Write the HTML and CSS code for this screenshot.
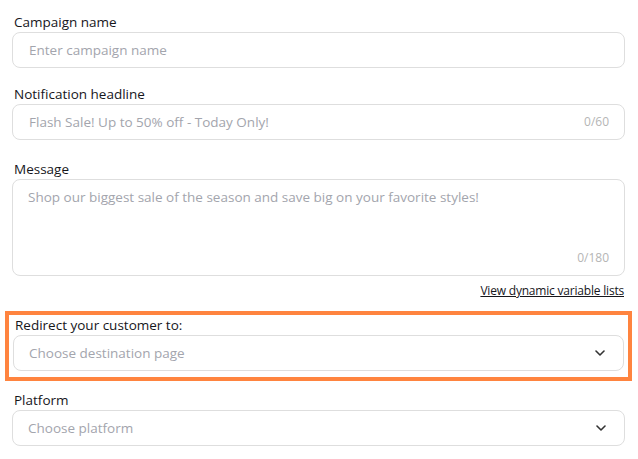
FILE: index.html
```html
<!DOCTYPE html>
<html lang="en">
<head>
    <meta charset="UTF-8">
    <meta name="viewport" content="width=device-width, initial-scale=1.0">
    <title>New campaign</title>
    <link rel="stylesheet" href="styles.css">
</head>
<body>
    <form class="campaign_form">
        <div class="field">
            <label class="field_label" for="name">Campaign name</label>
            <input class="field_input" id="name" type="text" placeholder="Enter campaign name">
        </div>

        <div class="field">
            <label class="field_label" for="headline">Notification headline</label>
            <div class="input_wrap">
                <input class="field_input has_count" id="headline" type="text" placeholder="Flash Sale! Up to 50% off - Today Only!">
                <span class="counter">0/60</span>
            </div>
        </div>

        <div class="field field_message">
            <label class="field_label" for="message">Message</label>
            <div class="input_wrap">
                <textarea class="field_input field_area" id="message" placeholder="Shop our biggest sale of the season and save big on your favorite styles!"></textarea>
                <span class="counter counter_area">0/180</span>
            </div>
            <div class="link_row">
                <a class="var_link" href="#">View dynamic variable lists</a>
            </div>
        </div>

        <!-- highlighted step -->
        <div class="field field_focus">
            <div class="field_label">Redirect your customer to:</div>
            <div class="select_box">
                <span class="select_text">Choose destination page</span>
                <svg class="chevron" width="10" height="6" viewBox="0 0 10 6"><path d="M1 1l4 4 4-4" fill="none" stroke="#333" stroke-width="1.6" stroke-linecap="round" stroke-linejoin="round"/></svg>
            </div>
        </div>

        <div class="field">
            <div class="field_label">Platform</div>
            <div class="select_box">
                <span class="select_text">Choose platform</span>
                <svg class="chevron" width="10" height="6" viewBox="0 0 10 6"><path d="M1 1l4 4 4-4" fill="none" stroke="#333" stroke-width="1.6" stroke-linecap="round" stroke-linejoin="round"/></svg>
            </div>
        </div>
    </form>
</body>
</html>
```

FILE: styles.css
```css
*{
    box-sizing: border-box;
}
body{
    margin: 0;
    padding: 0;
    background-color: #fff;
    font-family: "Open Sans", "Noto Sans", sans-serif;
    color: #16161b;
}
.campaign_form{
    padding: 12px 13px 0 12px;
}
    .field{
        margin-bottom: 16px;
    }
        .field_label{
            display: block;
            padding-left: 2px;
            font-size: 13.5px;
            line-height: 20px;
        }
        .input_wrap{
            position: relative;
        }
        .field_input{
            display: block;
            width: 100%;
            height: 36px;
            padding: 0 16px;
            border: 1px solid #dedede;
            border-radius: 8px;
            font-family: inherit;
            font-size: 13.5px;
            color: #16161b;
            outline: none;
        }
        .field_input::placeholder{
            color: #a3a5ad;
        }
        .has_count{
            padding-right: 60px;
        }
        .counter{
            position: absolute;
            right: 16px;
            top: 9px;
            font-size: 12px;
            line-height: 18px;
            color: #b5b5b5;
        }
    .field_message{
        margin-top: 19px;
        margin-bottom: 11px;
    }
        .field_area{
            height: 97px;
            padding: 6px 15px;
            line-height: 22px;
            resize: none;
        }
        .counter_area{
            top: auto;
            bottom: 9px;
        }
        .link_row{
            display: flex;
            justify-content: flex-end;
            padding: 6px 1px 0 0;
        }
            .var_link{
                font-size: 12px;
                line-height: 18px;
                letter-spacing: -0.2px;
                color: #16161b;
                text-decoration: underline;
            }
    .field_focus{
        margin: 0 -7px 9px -7px;
        border: 4px solid #ff843f;
        padding: 0 4px 6px 4px;
    }
        .select_box{
            height: 36px;
            border: 1px solid #dedede;
            border-radius: 8px;
            padding: 0 18px 0 15px;

            display: flex;
            align-items: center;
            justify-content: space-between;
        }
            .select_text{
                font-size: 13.5px;
                color: #a3a5ad;
            }
            .chevron{
                display: block;
            }
```
